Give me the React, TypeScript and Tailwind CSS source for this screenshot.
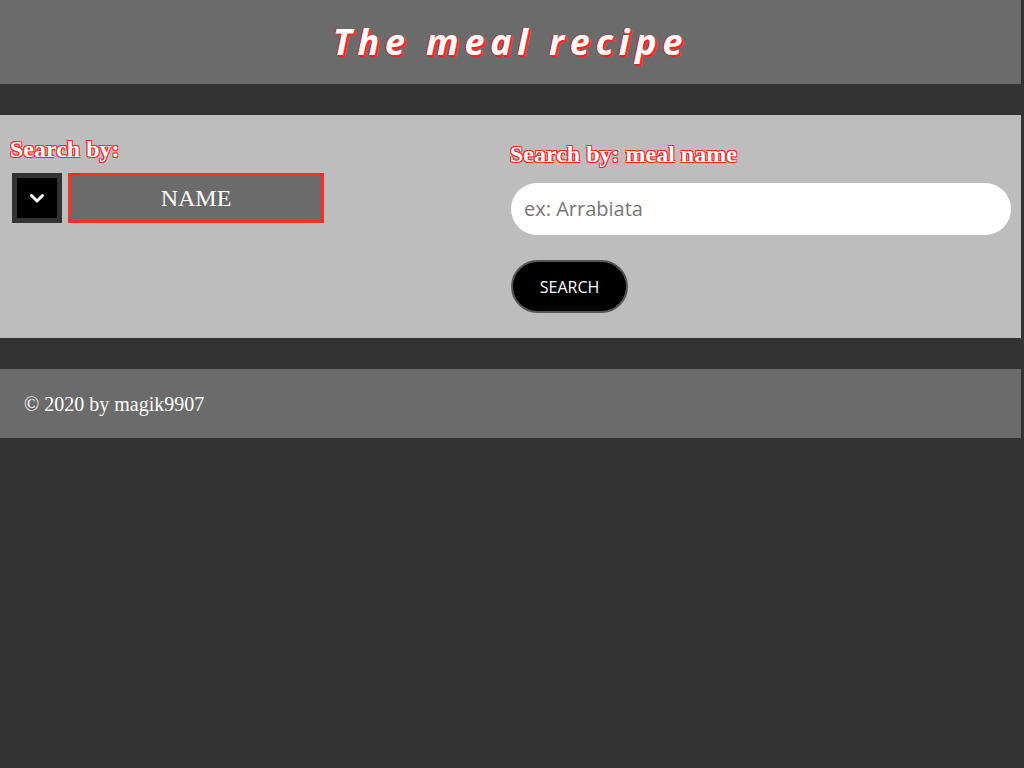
import React from "react";

const serif = { fontFamily: '"Liberation Serif", "Times New Roman", serif' };
const sans = { fontFamily: '"Open Sans", sans-serif' };

const headShadow =
  "[text-shadow:-1px_-1px_0_#ff2222,1px_1px_0_#ff2222,1px_-1px_0_#ff2222,-1px_1px_0_#ff2222]";

export default function App() {
  return (
    <div className="min-h-[768px] w-[1024px] bg-[#333333]">
      <div className="w-[1021px]">
        <header className="h-[84px] bg-[#6b6b6b] flex items-center justify-center">
          <h1
            className="text-[36px] font-bold italic text-white tracking-[0.16em] [text-shadow:-1px_0_0_#ff2222,2px_2px_0_#ff2222,1px_1px_0_#ff2222]"
            style={sans}
          >
            The meal recipe
          </h1>
        </header>
        <div className="h-[31px]" />
        <main className="h-[223px] bg-[#bdbdbd] flex">
          <div className="w-[510px] pl-[10px] pt-[20px]">
            <div
              className={`text-[24px] font-bold leading-[28px] text-white ${headShadow}`}
              style={serif}
            >
              Search by:
            </div>
            <div className="flex mt-[10px] ml-[2px] gap-[6px]">
              <div className="w-[50px] h-[50px] bg-black border-[5px] border-[#333333] flex items-center justify-center">
                <svg width="16" height="12" viewBox="0 0 16 12">
                  <path d="M2.5 3.5 L8 9 L13.5 3.5" fill="none" stroke="white" strokeWidth="3" strokeLinecap="round" strokeLinejoin="round" />
                </svg>
              </div>
              <div
                className="w-[256px] h-[50px] bg-[#6b6b6b] border-[3px] border-[#ff2a2a] flex items-center justify-center text-white text-[24px]"
                style={serif}
              >
                NAME
              </div>
            </div>
          </div>
          <div className="flex-1 pt-[25px]">
            <div
              className={`text-[24px] font-bold leading-[28px] text-white ${headShadow}`}
              style={serif}
            >
              Search by: meal name
            </div>
            <div
              className="mt-[15px] ml-[1px] w-[500px] h-[52px] rounded-full bg-white flex items-center pl-[13px] text-[20px] text-[#777777]"
              style={sans}
            >
              ex: Arrabiata
            </div>
            <button
              className="mt-[25px] ml-[1px] w-[117px] h-[53px] rounded-full bg-black border-2 border-[#555555] text-white text-[16px]"
              style={sans}
            >
              SEARCH
            </button>
          </div>
        </main>
        <div className="h-[31px]" />
        <footer className="h-[69px] bg-[#6b6b6b] flex items-center pl-[24px]">
          <span className="text-white text-[20px]" style={serif}>
            © 2020 by magik9907
          </span>
        </footer>
      </div>
    </div>
  );
}
